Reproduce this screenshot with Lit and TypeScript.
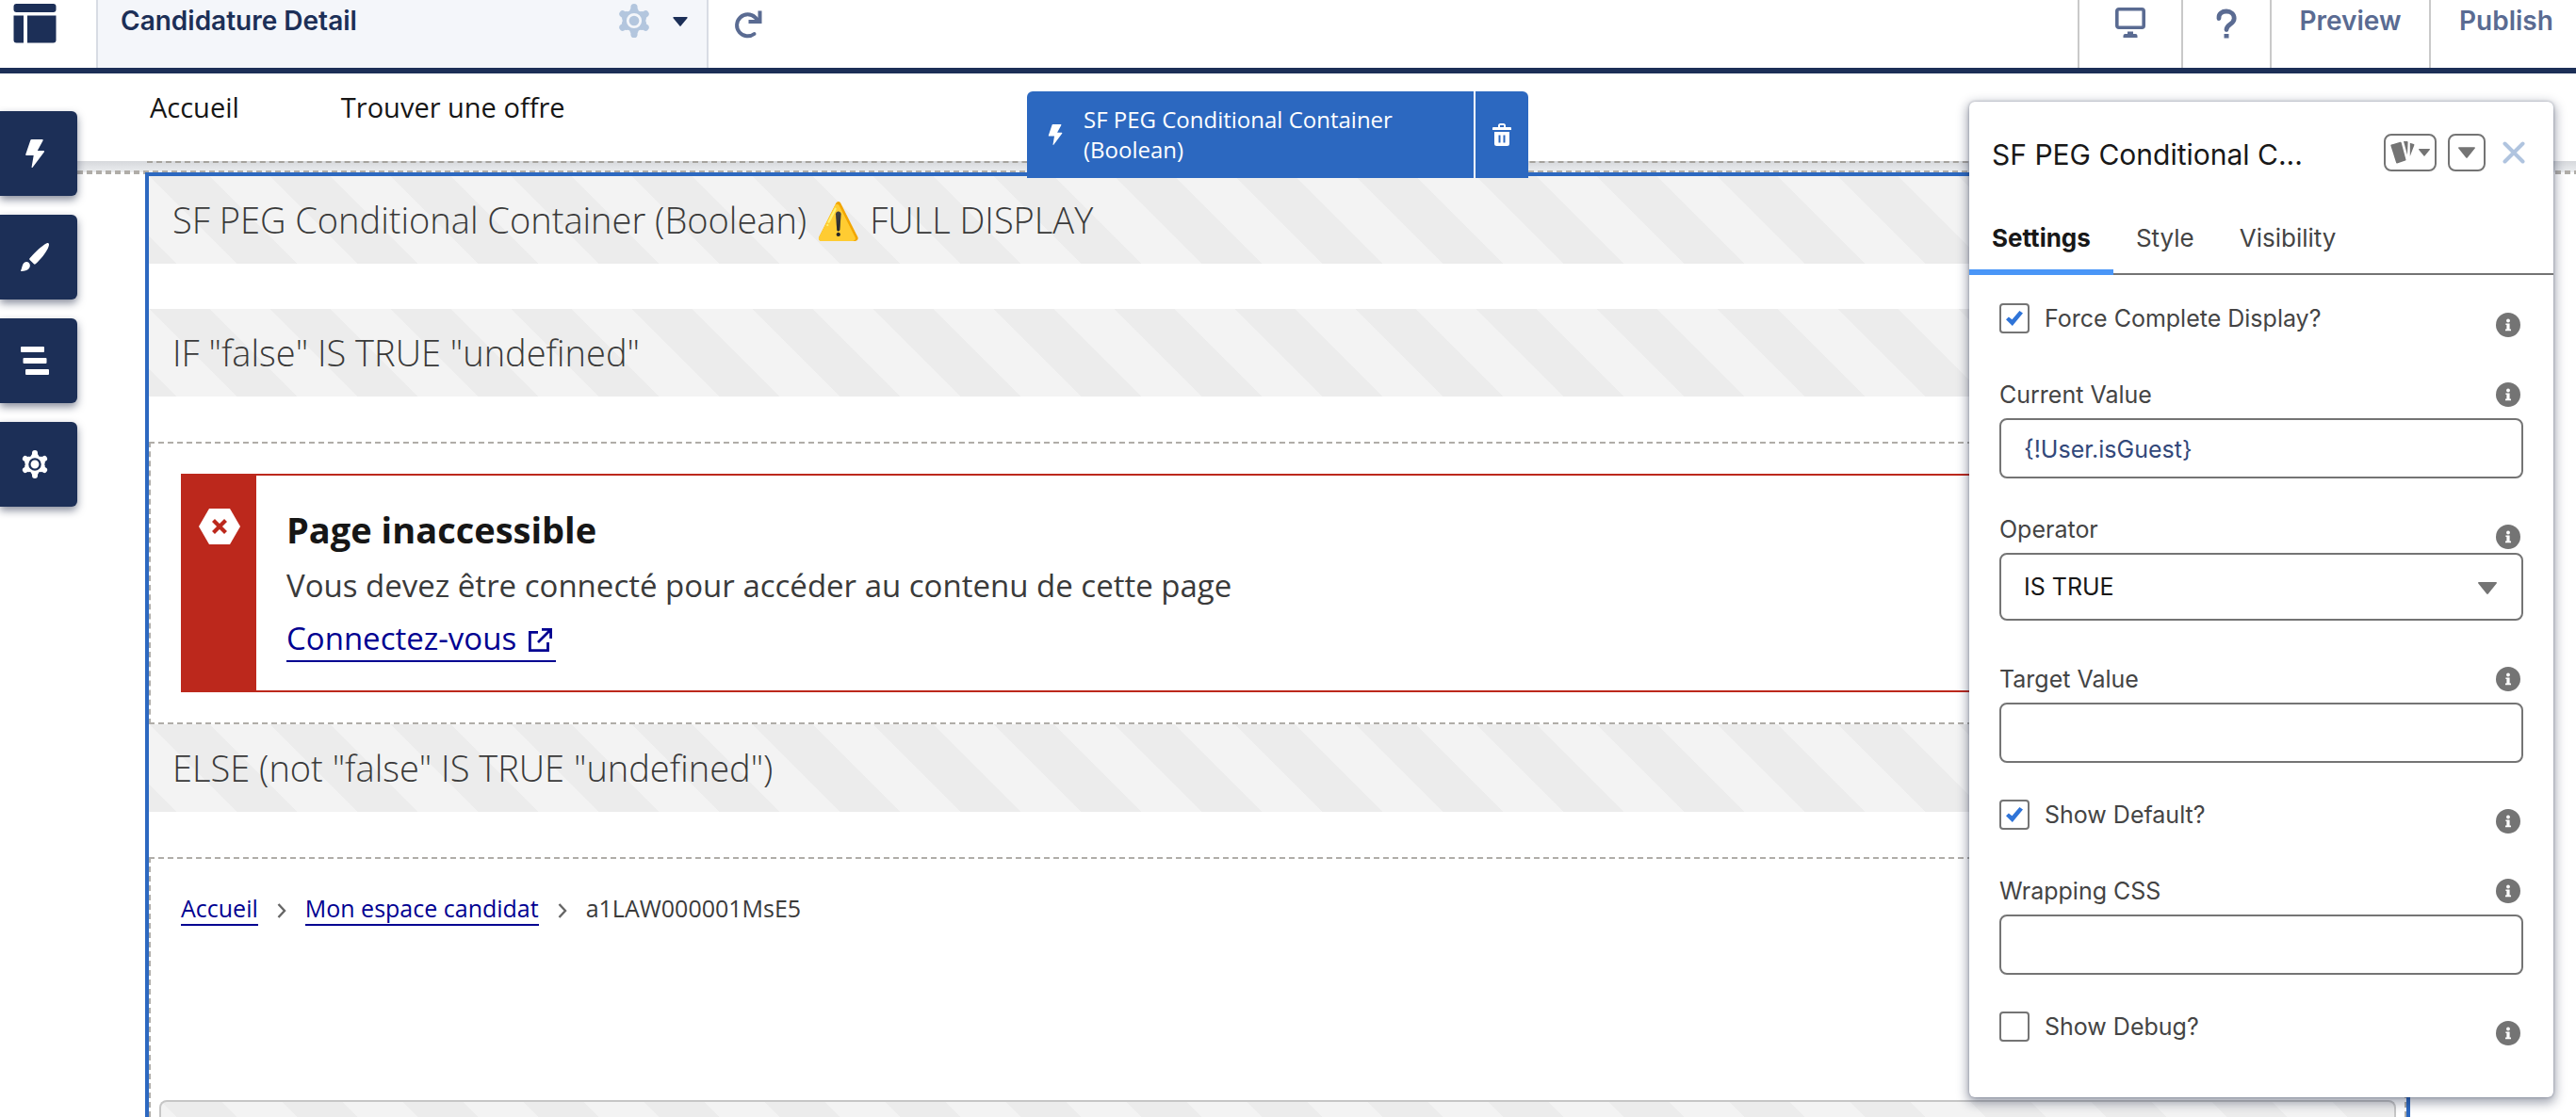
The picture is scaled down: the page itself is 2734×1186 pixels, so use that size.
import { LitElement, html, css } from "lit";
import { customElement, property } from "lit/decorators.js";

const gear = (body: string, hole: string) => html`
  <svg class="gear" viewBox="0 0 28 30" aria-hidden="true">
    <g fill=${body} stroke=${body}>
      <circle cx="14" cy="15" r="11" stroke="none"></circle>
      <path d="M14 3V27M3.900 9 24.100 21M3.900 21 24.100 9" fill="none" stroke-width="6" stroke-linecap="round"></path>
    </g>
    <g fill=${hole}>
      <circle cx="8.200" cy="4.600" r="2.300"></circle>
      <circle cx="19.800" cy="4.600" r="2.300"></circle>
      <circle cx="8.200" cy="25.400" r="2.300"></circle>
      <circle cx="19.800" cy="25.400" r="2.300"></circle>
      <circle cx="1.800" cy="15" r="2"></circle>
      <circle cx="26.200" cy="15" r="2"></circle>
    </g>
    <circle cx="14" cy="15" r="5.600" fill="none" stroke=${hole} stroke-width="2.300"></circle>
  </svg>`;

const bolt = html`
  <svg class="bolt" viewBox="0 0 20 30" aria-hidden="true">
    <path fill="#fff" d="M6.500 0h11.300c.8 0 1.200.7.8 1.300L12.800 12h6.400c.8 0 1.100.8.6 1.400L7.600 29.700c-.4.600-1.200.2-1-.5L8.700 17H1C.3 17 0 16.500.2 15.900L5.400.8C5.600.3 6 0 6.500 0z"></path>
  </svg>`;

const brush = html`
  <svg class="tool" viewBox="0 0 30 30" aria-hidden="true">
    <path fill="#fff" d="M29.600.4c.8.800.4 3-.9 5.600-2.700 5.400-8.300 12.300-13 16.300-.6.500-1.200.5-1.700 0l-4.400-4.400c-.5-.5-.6-1.100-.1-1.700C13.500 11.500 20 5 25 1.700 27.200.3 28.900-.3 29.600.4z"></path>
    <path fill="#fff" d="M7.400 20.300c2.700 1.100 3.300 4.400 1.200 7-1.700 2-4.600 2.700-7.900 2.700-.6 0-.9-.5-.6-1 .9-1.300.9-2.900 1.700-5 .9-2.600 3.200-4.500 5.600-3.700z"></path>
  </svg>`;

const tree = html`
  <svg class="tool" viewBox="0 0 30 30" aria-hidden="true">
    <g fill="#fff">
      <rect x="0" y="0" width="25" height="6" rx="1"></rect>
      <rect x="2.500" y="12" width="25" height="6" rx="1"></rect>
      <rect x="5" y="24" width="25" height="6" rx="1"></rect>
    </g>
  </svg>`;

const caret = (cls: string) => html`
  <svg class=${cls} viewBox="0 0 20 13" aria-hidden="true"><path fill="currentColor" d="M1 0h18c.9 0 1.300.9.7 1.500L10.800 12.500c-.4.600-1.200.6-1.600 0L.3 1.500C-.3.900.1 0 1 0z"></path></svg>`;

/** Label with a trailing information icon, followed by its control. */
@customElement("setting-field")
class SettingField extends LitElement {
  @property() kind: "check" | "text" | "select" = "text";
  @property() label = "";
  @property() value = "";
  @property({ type: Boolean }) checked = false;

  static styles = css`
    :host { display: block; font: 25px/30px Inter, "Liberation Sans", sans-serif; color: #444; }
    .row { display: flex; justify-content: space-between; align-items: center; height: 30px; padding-right: 3px; }
    .row.check { align-items: flex-end; padding-bottom: 7px; height: 36px; }
    .row.select { align-items: flex-start; }
    .select .info { margin-top: 10px; }
    label { display: flex; align-items: center; gap: 16px; }
    .check label { align-self: flex-start; }
    .info { display: block; width: 26px; height: 26px; flex: none; }
    input, select {
      box-sizing: border-box; margin: 0; border: 2px solid #747474; background: #fff;
      font: inherit; border-radius: 8px; appearance: none; outline: none;
    }
    input[type="text"] { display: block; width: 100%; height: 64px; margin-top: 10px; padding: 2px 24px 0; color: #32487a; }
    .pick { display: grid; align-items: center; margin-top: 10px; padding-bottom: 8px; }
    .pick > * { grid-area: 1 / 1; }
    select { width: 100%; height: 72px; padding: 0 24px; color: #181818; }
    .caret { justify-self: end; width: 20px; height: 15px; margin-right: 28px; margin-top: 3px; color: #747474; pointer-events: none; }
    input[type="checkbox"] { display: grid; place-items: center; width: 32px; height: 32px; border-radius: 4px; }
    input[type="checkbox"]:checked::before {
      content: ""; width: 18px; height: 16px; background: #2f74d8;
      clip-path: polygon(0 58%, 16% 40%, 36% 58%, 80% 0, 100% 16%, 38% 100%);
    }
  `;

  private get info() {
    return html`<svg class="info" viewBox="0 0 26 26" role="img" aria-label="Info">
      <circle cx="13" cy="13" r="13" fill="#747474"></circle>
      <circle cx="13" cy="8.500" r="1.900" fill="#fff"></circle>
      <path fill="#fff" d="M10.400 11.400h4.200v6.200h1.400v1.600h-6v-1.600h1.400v-4.600h-1z"></path>
    </svg>`;
  }

  render() {
    if (this.kind === "check") {
      return html`<div class="row check">
        <label><input type="checkbox" .checked=${this.checked} />${this.label}</label>${this.info}
      </div>`;
    }
    return html`
      <div class="row ${this.kind}"><label for="control">${this.label}</label>${this.info}</div>
      ${this.kind === "select"
        ? html`<div class="pick"><select id="control"><option>${this.value}</option></select>${caret("caret")}</div>`
        : html`<input id="control" type="text" .value=${this.value} />`}
    `;
  }
}

/** Floating property panel of the selected component. */
@customElement("property-panel")
class PropertyPanel extends LitElement {
  static styles = css`
    :host {
      display: block; box-sizing: border-box; background: #fff; border-radius: 6px; overflow: hidden;
      box-shadow: 0 4px 12px 2px rgba(20, 30, 60, .4), 0 0 3px rgba(20, 30, 60, .35);
      font-family: Inter, "Liberation Sans", sans-serif; color: #181818;
    }
    header { display: flex; align-items: center; padding: 32px 30px 32px 24px; }
    h2 { flex: 1; min-width: 0; margin: 0; padding-top: 4px; font: 400 30px/40px Inter, "Liberation Sans", sans-serif; white-space: nowrap; }
    button { font: inherit; color: #747474; background: none; margin: 0; padding: 0; border: 0; }
    .boxed { display: flex; align-items: center; justify-content: center; gap: 4px; height: 40px; border: 2px solid #747474; border-radius: 8px; box-sizing: border-box; }
    .cards { width: 56px; margin-right: 12px; }
    .menu { width: 40px; margin-right: 18px; }
    .swatch { width: 26px; height: 24px; }
    .small { width: 12px; height: 8px; }
    .large { width: 18px; height: 12px; }
    .close svg { display: block; width: 24px; height: 24px; }
    nav { display: flex; border-bottom: 2px solid #747474; }
    nav button { position: relative; height: 74px; padding: 0 24px 2px; font-size: 26px; color: #444; }
    nav .active { font-weight: 700; color: #181818; }
    nav .active::after { content: ""; position: absolute; left: 0; right: 0; bottom: -2px; height: 6px; background: #4a96f7; }
    .body { display: flex; flex-direction: column; gap: 39px; padding: 30px 32px 48px; }
  `;

  render() {
    return html`
      <header>
        <h2>SF PEG Conditional C...</h2>
        <button class="boxed cards" aria-label="Variants">
          <svg class="swatch" viewBox="0 0 26 24" aria-hidden="true">
            <g fill="#747474">
              <path d="M1 3.600 10.500.7c.5-.2 1 .1 1.100.6l4.900 18.200c.1.500-.1 1-.6 1.100l-8.700 2.800c-.5.200-1-.1-1.100-.6L.4 4.700c-.2-.5.100-1 .6-1.100z"></path>
              <path d="M14 0h3.800c.5 0 .8.400.8.900l-.6 13.600z"></path>
              <path d="M20.800 1.800 24.900 3c.5.200.7.600.5 1.100l-4.600 12z"></path>
            </g>
          </svg>
          ${caret("small")}
        </button>
        <button class="boxed menu" aria-label="More actions">${caret("large")}</button>
        <button class="close" aria-label="Close">
          <svg viewBox="0 0 24 24" aria-hidden="true"><path d="M2.500 2.500l19 19M21.500 2.500l-19 19" stroke="#b0c4df" stroke-width="4" stroke-linecap="round"></path></svg>
        </button>
      </header>
      <nav>
        <button class="active">Settings</button>
        <button>Style</button>
        <button>Visibility</button>
      </nav>
      <div class="body">
        <setting-field kind="check" label="Force Complete Display?" checked></setting-field>
        <setting-field label="Current Value" value="{!User.isGuest}"></setting-field>
        <setting-field kind="select" label="Operator" value="IS TRUE"></setting-field>
        <setting-field label="Target Value"></setting-field>
        <setting-field kind="check" label="Show Default?" checked></setting-field>
        <setting-field label="Wrapping CSS"></setting-field>
        <setting-field kind="check" label="Show Debug?"></setting-field>
      </div>
    `;
  }
}

@customElement("app-root")
class AppRoot extends LitElement {
  static styles = css`
    :host {
      position: relative; display: flex; flex-direction: column; height: 100vh; overflow: hidden;
      background: #fff; color: #161616; font-family: "Open Sans", "Noto Sans", sans-serif;
    }
    button { font: inherit; color: inherit; background: none; margin: 0; padding: 0; border: 0; }
    svg { display: block; flex: none; }

    .topbar { display: flex; flex: none; height: 72px; border-bottom: 6px solid #1c2f57; font: 600 28px/36px Inter, "Liberation Sans", sans-serif; color: #1c2f57; }
    .topbar > * { box-sizing: border-box; display: flex; align-items: flex-start; padding-top: 4px; }
    .logo { width: 102px; padding-left: 14px; }
    .logo svg { width: 46px; height: 42px; }
    .page { width: 650px; padding-left: 24px; padding-right: 20px; background: #f4f6fa; border: solid #d8dce4; border-width: 0 2px; }
    .page span { flex: 1; text-align: left; }
    .page .gear { width: 34px; height: 36px; margin-right: 24px; }
    .pagecaret { width: 16px; height: 10px; margin-top: 14px; }
    .refresh { padding-left: 26px; flex: 1; }
    .refresh svg { width: 32px; height: 32px; margin-top: 6px; }
    .action { justify-content: center; border-left: 2px solid #c9c9c9; color: #5a6b92; font-weight: 600; }
    .device { width: 110px; }
    .device svg { width: 34px; height: 34px; margin-top: 3px; }
    .help { width: 94px; }
    .help svg { width: 24px; height: 32px; margin-top: 5px; }
    .preview { width: 169px; }
    .publish { width: 156px; padding-left: 30px; justify-content: flex-start; }

    .sitenav { flex: none; display: flex; gap: 108px; box-sizing: border-box; height: 93px; padding: 17px 0 0 159px; font-size: 29px; line-height: 38px; }
    .sitenav a { color: inherit; text-decoration: none; }
    .edge {
      flex: none; position: relative; height: 16px; box-sizing: border-box; margin-bottom: -4px;
      background: linear-gradient(#d6d8dc, #eceef0 12px, #fff 12px);
    }
    .edge::before { content: ""; display: block; margin-left: 156px; margin-right: 176px; border-top: 2px dashed #a5a29d; }
    .edge::after {
      content: ""; position: absolute; left: 82px; right: 0; bottom: 2px; height: 4px;
      background: repeating-linear-gradient(90deg, #b0ada8 0 6px, transparent 6px 10px);
    }

    .canvas {
      position: relative; flex: 1; min-height: 0; display: flex; flex-direction: column;
      margin: 0 176px 0 154px; border: solid #2c68c0; border-width: 4px 4px 0; background: #fff;
    }
    .band {
      flex: none; box-sizing: border-box; height: 93px; padding-left: 25px; margin-bottom: 48px; color: #3a3a3a;
      font: 300 38px/93px "Open Sans", "Noto Sans", "Noto Color Emoji", sans-serif;
      white-space: nowrap;
    }
    .stripes {
      background: linear-gradient(45deg, #ececec 25%, #f3f3f3 25% 50%, #ececec 50% 75%, #f3f3f3 75%) 0 0 / 128px 128px;
    }
    .zone { border: 2px dashed #b0ada8; }
    .first { flex: none; padding: 32px; }
    .alert { display: flex; border: 2px solid #bc281c; }
    .mark { display: flex; justify-content: center; width: 78px; padding-top: 35px; background: #bc281c; }
    .mark svg { width: 44px; height: 38px; }
    .message { display: flex; flex-direction: column; align-items: flex-start; padding: 30px 32px; }
    h3 { margin: 0; font-size: 38px; line-height: 54px; }
    p { margin: 4px 0; font-size: 33px; line-height: 58px; color: #3a3a3a; }
    .connect { display: flex; align-items: center; gap: 13px; padding-right: 4px; border-bottom: 2px solid #000091; color: #000091; font-size: 33px; line-height: 46px; text-decoration: none; }
    .connect svg { width: 25px; height: 25px; margin-top: 3px; }
    .second { flex: 1; min-height: 0; display: flex; flex-direction: column; border-bottom: 0; padding: 32px 9px 0; }
    .crumbs { flex: none; display: flex; align-items: flex-start; gap: 20px; height: 214px; padding: 3px 23px 10px; box-sizing: border-box; font-size: 25px; line-height: 34px; color: #3a3a3a; }
    .crumbs a { color: #000091; text-decoration: none; border-bottom: 2px solid #000091; }
    .crumbs svg { width: 10px; height: 16px; margin-top: 12px; }
    .card { flex: 1; min-height: 18px; margin-top: 10px; border: 2px solid #c6c6c6; border-bottom: 0; border-radius: 8px 8px 0 0; }

    .selection {
      position: absolute; z-index: 1; left: calc(50% - 266px); top: -90px; display: flex; width: 532px; height: 92px;
      background: #2c68c0; color: #fff; border-radius: 6px 6px 0 0; font-size: 24px; line-height: 32px;
    }
    .selection .name { flex: 1; display: flex; align-items: center; gap: 22px; padding: 0 60px 0 22px; }
    .selection .bolt { width: 16px; height: 22px; }
    .selection button { display: flex; align-items: center; justify-content: center; width: 58px; border-left: 2px solid #fff; }
    .selection button svg { width: 20px; height: 24px; }

    .tools { position: absolute; left: 0; top: 118px; display: flex; flex-direction: column; gap: 20px; }
    .tools button { display: flex; align-items: center; justify-content: center; width: 82px; height: 90px; padding-right: 8px; background: #1c2f57; border-radius: 0 6px 6px 0; box-shadow: 0 4px 8px rgba(20, 30, 60, .5); }
    .tools .bolt { width: 20px; height: 30px; }
    .tools .tool, .tools .gear { width: 30px; height: 30px; }
    property-panel { position: absolute; z-index: 2; top: 108px; right: 24px; width: 620px; }
  `;

  private chevron = () => html`<svg viewBox="0 0 10 16" aria-hidden="true"><path d="M1.500 1l6.500 7-6.500 7" fill="none" stroke="#666" stroke-width="2.400"></path></svg>`;

  render() {
    return html`
      <header class="topbar">
        <div class="logo">
          <svg viewBox="0 0 46 42" fill="#1c2f57" aria-hidden="true">
            <rect x="0.500" y="0" width="45" height="9" rx="3"></rect>
            <path d="M.5 12.500H11V41.500H3.500a3 3 0 0 1-3-3z"></path>
            <path d="M15 12.500H45.500V38.500a3 3 0 0 1-3 3H15z"></path>
          </svg>
        </div>
        <button class="page"><span>Candidature Detail</span>${gear("#b3c6de", "#f4f6fa")}${caret("pagecaret")}</button>
        <div class="refresh">
          <button aria-label="Refresh">
            <svg viewBox="0 0 32 32" fill="none" stroke="#5a6b92" stroke-width="4" aria-hidden="true">
              <path d="M22.500 26A11.500 11.500 0 1 1 23.500 8.500L27 12" stroke-linecap="round"></path>
              <path d="M28.500 1.500V13H16.500"></path>
            </svg>
          </button>
        </div>
        <button class="action device" aria-label="Device">
          <svg viewBox="0 0 34 34" aria-hidden="true">
            <rect x="2.800" y="2.800" width="28.400" height="19.400" rx="2" fill="none" stroke="#5a6b92" stroke-width="3.600"></rect>
            <path fill="#5a6b92" d="M14 26.500h6v2.500h2.500a2 2 0 0 1 2 2V33h-15v-2a2 2 0 0 1 2-2H14z"></path>
          </svg>
        </button>
        <button class="action help" aria-label="Help">
          <svg viewBox="0 0 24 32" fill="none" stroke="#5a6b92" stroke-width="4.800" aria-hidden="true">
            <path d="M4 10.500C3.500 5.500 7.500 3 12 3s8.200 3 8.200 7.500c0 6.500-8.200 6-8.200 12" stroke-linecap="round"></path>
            <path d="M12 27v4.500" stroke-width="5"></path>
          </svg>
        </button>
        <button class="action preview">Preview</button>
        <button class="action publish">Publish</button>
      </header>

      <nav class="sitenav"><a href="#">Accueil</a><a href="#">Trouver une offre</a></nav>
      <div class="edge"></div>

      <main class="canvas">
        <div class="selection">
          <div class="name">${bolt}<span>SF PEG Conditional Container (Boolean)</span></div>
          <button aria-label="Delete">
            <svg viewBox="0 0 20 24" fill="#fff" aria-hidden="true">
              <path d="M6 4V2.500A2.500 2.500 0 0 1 8.500 0h3A2.500 2.500 0 0 1 14 2.500V4h5a1 1 0 0 1 1 1v2H0V5a1 1 0 0 1 1-1zM8 4h4V2H8z"></path>
              <path fill-rule="evenodd" d="M2 9h16v12.500a2.500 2.500 0 0 1-2.500 2.500h-11A2.500 2.500 0 0 1 2 21.500zM6.500 12.500v8h2v-8zM11.500 12.500v8h2v-8z"></path>
            </svg>
          </button>
        </div>
        <div class="band stripes">SF PEG Conditional Container (Boolean) ⚠️ FULL DISPLAY</div>
        <div class="band stripes">IF "false" IS TRUE "undefined"</div>
        <section class="zone first">
          <div class="alert">
            <div class="mark">
              <svg viewBox="0 0 44 38" aria-hidden="true">
                <path fill="#fff" d="M11 0h22l11 19-11 19H11L0 19z"></path>
                <path d="M15.500 12.500l13 13M28.500 12.500l-13 13" stroke="#bc281c" stroke-width="4.200"></path>
              </svg>
            </div>
            <div class="message">
              <h3>Page inaccessible</h3>
              <p>Vous devez être connecté pour accéder au contenu de cette page</p>
              <a class="connect" href="#">Connectez-vous
                <svg viewBox="0 0 25 25" fill="none" stroke="#000091" stroke-width="2.800" aria-hidden="true">
                  <path d="M10 4.400H1.400V23.600H20.500V15"></path>
                  <path d="M14 1.400h9.600V11M23 2L10 15"></path>
                </svg>
              </a>
            </div>
          </div>
        </section>
        <div class="band stripes">ELSE (not "false" IS TRUE "undefined")</div>
        <section class="zone second">
          <nav class="crumbs">
            <a href="#">Accueil</a>${this.chevron()}<a href="#">Mon espace candidat</a>${this.chevron()}<span>a1LAW000001MsE5</span>
          </nav>
          <div class="card stripes"></div>
        </section>
      </main>

      <div class="tools">
        <button aria-label="Components">${bolt}</button>
        <button aria-label="Theme">${brush}</button>
        <button aria-label="Page Structure">${tree}</button>
        <button aria-label="Settings">${gear("#fff", "#1c2f57")}</button>
      </div>
      <property-panel></property-panel>
    `;
  }
}
